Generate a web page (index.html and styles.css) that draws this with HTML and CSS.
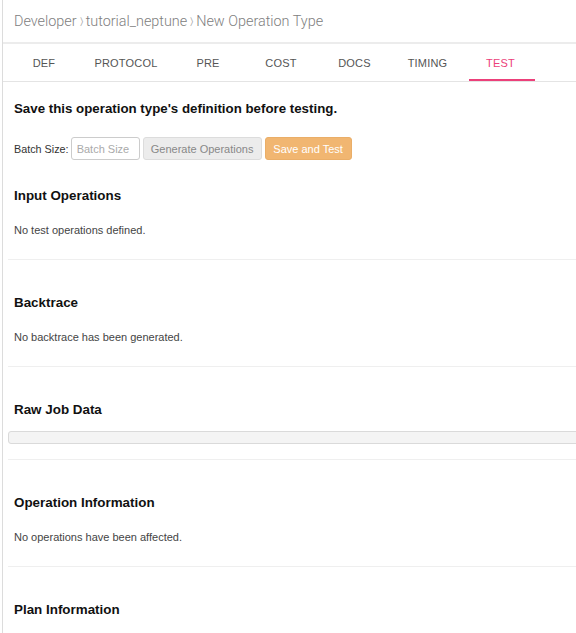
FILE: index.html
```html
<!DOCTYPE html>
<html>
<head>
<meta charset="utf-8">
<link rel="stylesheet" href="styles.css">
</head>
<body>
<div class="page">
  <div class="crumbs">
    <span>Developer</span><span class="sep">&#x232A;</span><span>tutorial_neptune</span><span class="sep">&#x232A;</span><span>New Operation Type</span>
  </div>
  <div class="tabs">
    <div class="tab t-def">DEF</div>
    <div class="tab t-protocol">PROTOCOL</div>
    <div class="tab">PRE</div>
    <div class="tab t-cost">COST</div>
    <div class="tab t-wide">DOCS</div>
    <div class="tab t-wide">TIMING</div>
    <div class="tab t-wide active">TEST</div>
  </div>
  <div class="content">
    <div class="intro">
      <h2 class="notice">Save this operation type's definition before testing.</h2>
      <div class="batch">
        <label class="batch-label">Batch Size:</label>
        <input class="batch-input" type="text" placeholder="Batch Size">
        <button class="btn btn-gen">Generate Operations</button>
        <button class="btn btn-save">Save and Test</button>
      </div>
    </div>
    <div class="section first">
      <h3 class="sec-title">Input Operations</h3>
      <p class="sec-text">No test operations defined.</p>
    </div>
    <div class="section">
      <h3 class="sec-title">Backtrace</h3>
      <p class="sec-text">No backtrace has been generated.</p>
    </div>
    <div class="section">
      <h3 class="sec-title">Raw Job Data</h3>
      <pre class="raw"></pre>
    </div>
    <div class="section">
      <h3 class="sec-title">Operation Information</h3>
      <p class="sec-text">No operations have been affected.</p>
    </div>
    <div class="section last">
      <h3 class="sec-title">Plan Information</h3>
    </div>
  </div>
</div>
</body>
</html>
```

FILE: styles.css
```css
html, body {
  margin: 0;
  padding: 0;
  background: #fff;
}
body {
  font-family: "Liberation Sans", Arial, sans-serif;
  color: #222;
  overflow: hidden;
}
.page {
  margin-left: 2px;
  border-left: 1px solid #dcdcdc;
  min-height: 633px;
}
.crumbs {
  height: 42px;
  display: flex;
  align-items: center;
  padding-left: 11px;
  font-family: Roboto, "Liberation Sans", sans-serif;
  font-weight: 300;
  font-size: 14.4px;
  color: #808080;
  border-bottom: 2px solid #ececec;
}
.crumbs .sep {
  font-size: 10px;
  color: #aaa;
  margin: 0 3px;
}
.tabs {
  display: flex;
  height: 37px;
  padding-left: 5px;
  border-bottom: 1px solid #e4e4e4;
}
.tab {
  width: 72px;
  display: flex;
  flex-direction: column;
  justify-content: center;
  align-items: center;
  font-size: 11px;
  color: #555;
  letter-spacing: 0.2px;
  position: relative;
}
.t-protocol { width: 92px; }
.t-cost { width: 74px; }
.t-wide { width: 73px; }
.tab.active {
  color: #ec407a;
}
.tab.active::after {
  content: "";
  position: absolute;
  left: 5px;
  right: 2px;
  bottom: 0;
  height: 2px;
  background: #ec407a;
}
.content {
  padding-left: 5px;
}
.intro {
  padding: 18px 0 0 6px;
}
.notice {
  margin: 0;
  font-size: 13.3px;
  font-weight: bold;
  color: #111;
  line-height: 18px;
}
.batch {
  display: flex;
  align-items: center;
  margin-top: 19px;
  height: 23px;
}
.batch-label {
  font-size: 10.8px;
  color: #333;
  margin-right: 2px;
}
.batch-input {
  box-sizing: border-box;
  width: 69px;
  height: 23px;
  border: 1px solid #ccc;
  border-radius: 3px;
  padding: 0 5px;
  font-family: "Liberation Sans", Arial, sans-serif;
  font-size: 11px;
  color: #333;
  margin: 0 3px 0 0;
  outline: none;
}
.batch-input::placeholder {
  color: #aaa;
}
.btn {
  box-sizing: border-box;
  height: 23px;
  border-radius: 3px;
  font-family: "Liberation Sans", Arial, sans-serif;
  font-size: 11px;
  padding: 0;
  margin: 0 3px 0 0;
  white-space: nowrap;
  text-align: center;
}
.btn-gen {
  width: 119px;
  background: #ececec;
  border: 1px solid #dcdcdc;
  color: #888;
}
.btn-save {
  width: 87px;
  background: #f1b671;
  border: 1px solid #eaae68;
  color: #fff;
}
.section {
  border-bottom: 1px solid #efefef;
  padding: 0 0 0 6px;
}
.section.first .sec-title {
  padding-top: 27px;
}
.section.last {
  border-bottom: none;
}
.sec-title {
  margin: 0;
  padding-top: 34px;
  font-size: 13.4px;
  font-weight: bold;
  color: #111;
  line-height: 18px;
}
.sec-text {
  margin: 17px 0 0;
  font-size: 11px;
  color: #444;
  line-height: 17px;
  padding-bottom: 20px;
}
.raw {
  margin: 12px -10px 15px -6px;
  height: 11px;
  background: #f4f4f4;
  border: 1px solid #dadada;
  border-radius: 3px;
  padding: 0;
}
```
